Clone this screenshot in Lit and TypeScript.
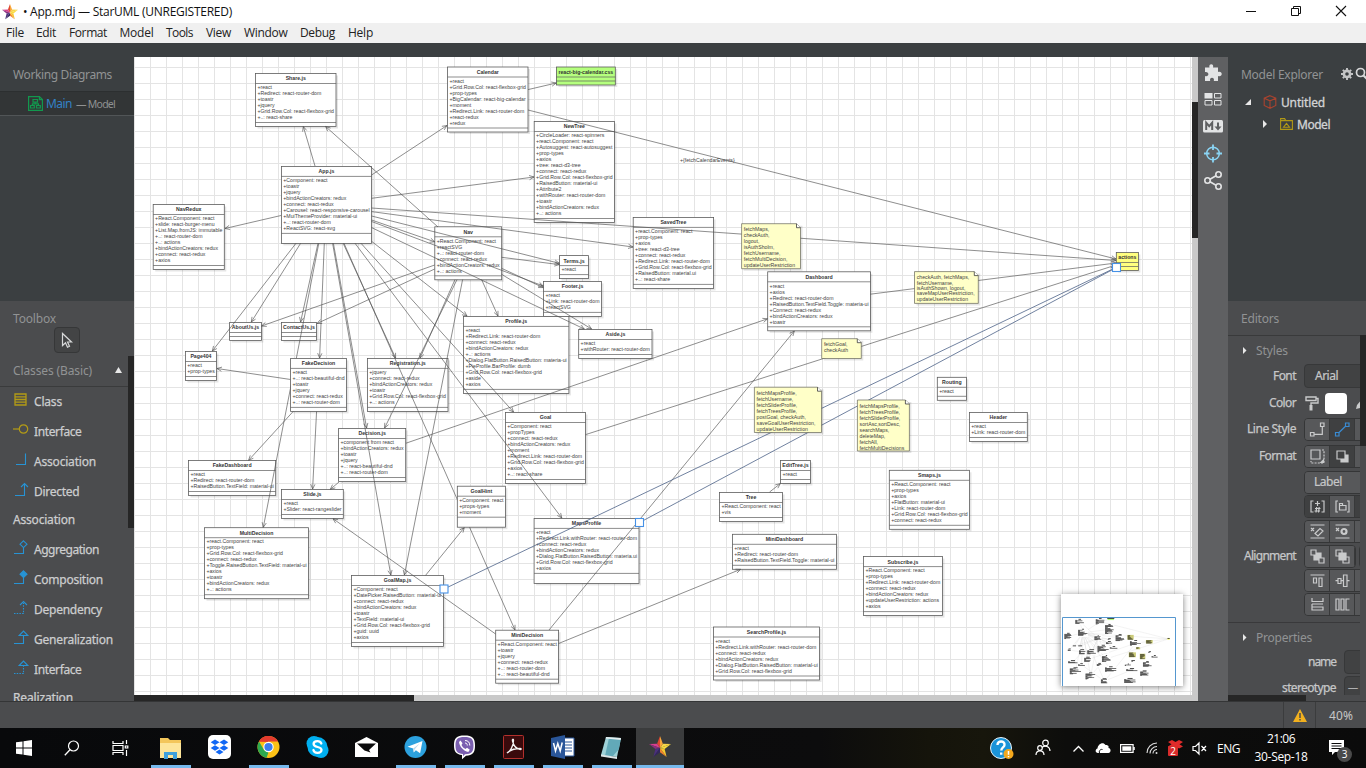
import { LitElement, html, svg, css } from "lit";
import { customElement, property } from "lit/decorators.js";

/* Text whose letter spacing is adjusted so that it takes exactly the given width. */
@customElement("fit-text")
class FitText extends LitElement {
  @property({ type: Number }) w = 0;
  static styles = css`
    :host { display: inline-block; white-space: pre; }
  `;
  render() {
    return html`<slot></slot>`;
  }
  firstUpdated() {
    const n = (this.textContent || "").length;
    const natural = this.getBoundingClientRect().width;
    if (this.w && n) this.style.letterSpacing = (this.w - natural) / n + "px";
  }
}

type Box = { x: number; y: number; r: number; t: string; a: string[]; ops?: number; fill?: string; top?: boolean };
const b = (x: number, y: number, r: number, t: string, a: string, extra: Partial<Box> = {}): Box => ({
  x, y, r, t, a: a ? a.split("|") : [], ...extra,
});

const BOXES: Box[] = [
  b(255.5, 73.5, 336, "Share.js", "react|Redirect: react-router-dom|toastr|jquery|Grid.Row.Col: react-flexbox-grid|..: react-share"),
  b(281.4, 166.4, 371.6, "App.js", "Component: react|toastr|jquery|bindActionCreators: redux|connect: react-redux|Carousel: react-responsive-carousel|MuiThemeProvider: material-ui|..: react-router-dom|ReactSVG: react-svg", { ops: 10 }),
  b(153.2, 204.5, 224.3, "NavRedux", "React.Component: react|slide: react-burger-menu|List.Map.fromJS: immutable|..: react-router-dom|..: actions|bindActionCreators: redux|connect: react-redux|axios"),
  b(447.5, 67, 528, "Calendar", "react|Grid.Row.Col: react-flexbox-grid|prop-types|BigCalendar: react-big-calendar|moment|Redirect.Link: react-router-dom|react-redux|redux"),
  b(556.4, 67, 615.3, "react-big-calendar.css", "", { fill: "#b5ff7e" }),
  b(534.2, 121.5, 614.5, "NewTree", "CircleLoader: react-spinners|react.Component: react|Autosuggest: react-autosuggest|prop-types|axios|tree: react-d3-tree|connect: react-redux|Grid.Row.Col: react-flexbox-grid|RaisedButton: material-ui|Attribute2|withRouter: react-router-dom|toastr|bindActionCreators: redux|..: actions"),
  b(434.8, 226.8, 501.7, "Nav", "React.Component: react|reactSVG|..: react-router-dom|connect: react-redux|bindActionCreators: redux|..: actions"),
  b(559.5, 255.6, 588.6, "Terms.js", "react"),
  b(543.5, 281.4, 601.6, "Footer.js", "react|Link: react-router-dom|reactSVG"),
  b(633.2, 217.4, 713.6, "SavedTree", "react.Component: react|prop-types|axios|tree: react-d3-tree|connect: react-redux|Redirect.Link: react-router-dom|Grid.Row.Col: react-flexbox-grid|RaisedButton: material.ui|..: react-share"),
  b(185.4, 351.5, 216.5, "Page404", "react|prop-types"),
  b(229.6, 322.5, 261.4, "AboutUs.js", ""),
  b(281.4, 322.5, 316.5, "ContactUs.js", ""),
  b(290.6, 358.4, 346.5, "FakeDecision", "react|..: react-beautiful-dnd|toastr|jquery|connect: react-redux|..: react-router-dom", { top: true }),
  b(367.4, 358.4, 448, "Registration.js", "jquery|connect: react-redux|bindActionCreators: redux|toastr|Grid.Row.Col: react-flexbox-grid|..: actions"),
  b(338.6, 428.5, 405.7, "Decision.js", "component from react|bindActionCreators: redux|toastr|jquery|..: react-beautiful-dnd|..: react-router-dom"),
  b(188.5, 460.5, 275.7, "FakeDashboard", "react|Redirect: react-router-dom|RaisedButton.TextField: material-ui"),
  b(281.5, 489.5, 343.3, "Slide.js", "react|Slider: react-rangeslider"),
  b(204.5, 527.7, 308.5, "MultiDecision", "react.Component: react|prop-types|Grid.Row.Col: react-flexbox-grid|connect: react-redux|Toggle.RaisedButton.TextField: material-ui|axios|toastr|bindActionCreators: redux|..: actions"),
  b(351.5, 575.5, 443.5, "GoalMap.js", "Component: react|DatePicker.RaisedButton: material-ui|connect: react-redux|bindActionCreators: redux|toastr|TextField: material-ui|Grid.Row.Col: react-flexbox-grid|guid: uuid|axios"),
  b(457.3, 486.2, 505.4, "GoalHint", "Component: react|props-types|moment", { ops: 10, top: true }),
  b(463.5, 316.4, 568.9, "Profile.js", "react|Redirect.Link: react-router-dom|connect: react-redux|bindActionCreators: redux|..: actions|Dialog.FlatButton.RaisedButton: materia-ui|PieProfile.BarProfile: dumb|Grid.Row.Col: react-flexbox-grid|aside|axios"),
  b(578.7, 329.5, 652, "Aside.js", "react|withRouter: react-router-dom"),
  b(505.4, 412.5, 585.6, "Goal", "Component: react|propTypes|connect: react-redux|bindActionCreators: redux|moment|Redirect.Link: react-router-dom|Grid.Row.Col: react-flexbox-grid|axios|..: react-share"),
  b(534.1, 518.4, 639, "MapsProfile", "react|Redirect.Link.withRouter: react-router-dom|connect: react-redux|bindActionCreators: redux|Dialog.FlatButton.RaisedButton: materia.ui|Grid.Row.Col: react-flexbox-grid|axios", { ops: 10 }),
  b(495.7, 630.2, 558.6, "MiniDecision", "React.Component: react|toastr|jquery|connect: react-redux|..: react-router-dom|..: react-beautiful-dnd"),
  b(767.7, 271.8, 870.4, "Dashboard", "react|axios|Redirect: react-router-dom|RaisedButton.TextField.Toggle: materia-ui|Connect: react-redux|bindActionCreators: redux|toastr"),
  b(1116.3, 252.5, 1138.4, "actions", "", { fill: "#ffff7f" }),
  b(780.5, 460.5, 810.4, "EditTree.js", "react"),
  b(719.5, 492.5, 782.6, "Tree", "React.Component: react|vis"),
  b(732.4, 534.3, 836.5, "MiniDashboard", "react|Redirect: react-router-dom|RaisedButton.TextField.Toggle: material-ui"),
  b(889.3, 470.3, 969.5, "Smaps.js", "React.Component: react|prop-types|axios|FlatButton: material-ui|Link: react-router-dom|Grid.Row.Col: react-flexbox-grid|connect: react-redux"),
  b(863.5, 556.6, 942.5, "Subscribe.js", "React.Component: react|prop-types|Redirect.Link: react-router-dom|connect: react-redux|bindActionCreators: redux|updateUserRestriction: actions|axios"),
  b(713.4, 627, 819.5, "SearchProfile.js", "react|Redirect.Link.withRouter: react-router-dom|connect: react-redux|bindActionCreators: redux|Dialog.FlatButton.RaisedButton: material-ui|Grid.Row.Col: react-flexbox-grid"),
  b(937.3, 377.3, 966.4, "Routing", "react"),
  b(969.4, 412.5, 1027.3, "Header", "react|Link: react-router-dom"),
];

/* x1, y1, x2, y2 : the arrowhead is at the second point */
const EDGES: number[][] = [
  [315, 166, 303.3, 126.5], [438, 227, 325.6, 126.5], [281, 215.5, 225, 228.5], [371.6, 175, 447, 125.5],
  [371.6, 198.3, 534, 177], [371.6, 208, 1116, 260.5], [371.6, 211.6, 633, 247], [371.6, 216, 559.3, 263.3],
  [371.6, 220, 434.7, 241.8], [371.6, 221.5, 543.3, 286], [371.6, 227.6, 584.3, 329], [371.6, 241.3, 467, 316],
  [501.6, 257.3, 559.3, 264.6], [501.6, 268.3, 543.3, 287.6], [501.6, 274.3, 591.6, 329], [434.7, 265, 261.6, 326],
  [434.7, 269, 317, 323.5], [455, 279.6, 420, 358], [457, 279.6, 384.6, 428], [462.6, 279.6, 404.4, 575],
  [481.6, 279.6, 498, 316], [296, 243.3, 212.3, 351], [300.6, 243.3, 251.3, 322], [318, 243.3, 300.6, 322],
  [318.8, 243.3, 263.3, 527.3], [324.3, 243.3, 319.6, 358], [332.6, 243.3, 390.8, 575], [333.4, 243.3, 366.6, 428],
  [343.2, 243.3, 395.6, 358], [344, 243.3, 515, 630], [355, 243.3, 561.8, 518], [361, 243.3, 513.5, 412],
  [290.6, 379.5, 217, 368.5], [293.6, 411, 248.6, 460.3], [316.6, 411, 312.6, 489], [339, 482, 330.3, 489.3],
  [406, 443.2, 767.5, 318.8], [585.6, 434.6, 1116, 265], [425.6, 575.3, 464.3, 527.6], [495.6, 634, 333, 518.7],
  [558.6, 643.5, 740.6, 569.3], [549, 630, 794.3, 331], [528, 89.6, 556.3, 83], [528, 110, 1116, 259],
  [870.3, 294.2, 1116, 263], [769.6, 492, 780.3, 483.6],
];
const SELECTED: number[][] = [[444, 589, 1116, 267.5], [639.6, 522.5, 1116.5, 267.5]];
const HANDLES: number[][] = [[444, 589], [639.5, 522.5], [1116.5, 267.5]];

type Note = { x: number; y: number; r: number; e: number; l: string[] };
const n = (x: number, y: number, r: number, e: number, l: string): Note => ({ x, y, r, e, l: l.split("|") });
const NOTES: Note[] = [
  n(741.6, 223.7, 800.5, 268.7, "fetchMaps,|checkAuth,|logout,|isAuthSholm,|fetchUsername,|fetchMultiDecision,|updateUserRestriction"),
  n(914.5, 271.6, 978.3, 303.4, "checkAuth, fetchMaps,|fetchUsername,|isAuthShown, logout,|saveMapUserRestriction,|updateUserRestriction"),
  n(821.7, 338.7, 861.3, 358.5, "fetchGoal,|checkAuth"),
  n(754.4, 387.2, 821.5, 432.5, "fetchMapsProfile,|fetchUsername,|fetchSliderProfile,|fetchTreesProfile,|postGoal, checkAuth,|saveGoalUserRestriction,|updateUserRestriction"),
  n(857.4, 400, 909.4, 451, "fetchMapsProfile,|fetchTreesProfile,|fetchSliderProfile,|sortAsc,sortDesc,|searchMaps,|deleteMap,|fetchAll,|fetchMultiDecisions"),
];

const attrH = (o: Box) => (o.a.length ? o.a.length * 6 + 3 : 4);
const boxH = (o: Box) => 10 + attrH(o) + (o.ops || 4);

const drawBox = (o: Box) => {
  const w = o.r - o.x;
  const h = boxH(o);
  return svg`
    <rect class="shade" x=${o.x + 2} y=${o.y + 2} width=${w} height=${h}></rect>
    <rect class="box" x=${o.x} y=${o.y} width=${w} height=${h} fill=${o.fill || "#fff"}></rect>
    <path class="rule" d="M${o.x} ${o.y + 10}h${w}M${o.x} ${o.y + 10 + attrH(o)}h${w}"></path>
    <text class="ttl" x=${o.x + w / 2} y=${o.y + 6.9}>${o.t}</text>
    ${o.a.map((s, i) => svg`<text class="att" x=${o.x + 1.9} y=${o.y + 15.7 + i * 6}>+${s}</text>`)}`;
};

const drawNote = (o: Note) => svg`
  <path class="shade" d="M${o.x + 2} ${o.y + 2}H${o.r + 2}V${o.e + 2}H${o.x + 2}Z"></path>
  <path class="note" d="M${o.x} ${o.y}H${o.r - 4}l4 4V${o.e}H${o.x}Z"></path>
  <path class="fold" d="M${o.r - 4} ${o.y}v4h4"></path>
  ${o.l.map((s, i) => svg`<text class="att" x=${o.x + 2.2} y=${o.y + 7.6 + i * (o.l.length === 5 ? 5.4 : 6)}>${s}</text>`)}`;

const drawEdge = (p: number[], cls: string) => {
  const a = Math.atan2(p[3] - p[1], p[2] - p[0]);
  const q = (d: number) => `${p[2] - 5.2 * Math.cos(a + d)} ${p[3] - 5.2 * Math.sin(a + d)}`;
  return svg`<path class=${cls} d="M${p[0]} ${p[1]}L${p[2]} ${p[3]}M${q(0.42)}L${p[2]} ${p[3]}L${q(-0.42)}"></path>`;
};

const drawMini = () => svg`
  ${EDGES.map((p) => svg`<path d="M${p[0]} ${p[1]}L${p[2]} ${p[3]}" stroke="#999" stroke-width="2" fill="none" opacity=".55"></path>`)}
  ${BOXES.map((o) => svg`
    <rect x=${o.x} y=${o.y} width=${o.r - o.x} height=${boxH(o)} fill=${o.fill || "#fff"}></rect>
    <rect x=${(o.x + o.r) / 2 - o.t.length * 1.5} y=${o.y} width=${o.t.length * 3} height="8" fill="#333"></rect>
    ${o.a.map((s, i) => svg`<rect x=${o.x - 2} y=${o.y + 10 + i * 6} width=${s.length * 2.4 + 4} height="6" fill=${i % 3 ? "#222" : "#484848"}></rect>`)}`)}
  ${NOTES.map((o) => svg`
    <rect x=${o.x} y=${o.y} width=${o.r - o.x} height=${o.e - o.y} fill="#cccc7a"></rect>
    ${o.l.map((s, i) => svg`<rect x=${o.x + 3} y=${o.y + 3 + i * 6} width=${s.length * 2.3} height="5" fill="#332"></rect>`)}`)}`;

const icon = (w: number, h: number, body: unknown, cls = "") =>
  html`<svg class="ic ${cls}" width=${w} height=${h} viewBox="0 0 ${w} ${h}">${body}</svg>`;

const star = (s: number) => html`<svg class="ic" width=${s} height=${s} viewBox="0 0 20 20">
  <path d="M10 0L7.4 7 10 11z" fill="#e0492f"></path>
  <path d="M0 7.2L7.4 7 10 11z" fill="#d93f8d"></path><path d="M0 7.2l5.8 4.6L10 11z" fill="#8a2f7d"></path>
  <path d="M4 19l1.8-7.2L10 11z" fill="#4b2f7c"></path><path d="M4 19l6-4.2V11z" fill="#33265e"></path>
  <path d="M16 19l-6-4.2V11z" fill="#f07f2e"></path><path d="M16 19l-1.8-7.2L10 11z" fill="#f7c62f"></path>
  <path d="M20 7.2l-5.8 4.6L10 11z" fill="#fbdc3c"></path><path d="M20 7.2L12.6 7 10 11z" fill="#f8d648"></path>
  <path d="M10 0l2.6 7L10 11z" fill="#f9a63a"></path></svg>`;

const conn = (head: unknown, dashed = false) => html`<svg class="ic tool" width="16" height="16" viewBox="0 0 16 16">
  <g fill="none" stroke="#2793d4" stroke-width="1.1">
    <path d="M1 13.5H10.5V3" stroke-dasharray=${dashed ? "1.5 1.2" : "none"}></path>${head}</g></svg>`;

const TOOLS: [string, number, unknown][] = [
  ["Class", 28, html`<svg class="ic tool" width="16" height="16" viewBox="0 0 16 16"><path d="M2 2h11v11H2zM2 4.8h11M2 7.5h11M2 10.2h11" fill="none" stroke="#b39b16" stroke-width="1.3"></path></svg>`],
  ["Interface", 47.5, html`<svg class="ic tool" width="16" height="16" viewBox="0 0 16 16"><g fill="none" stroke="#b39b16" stroke-width="1.2"><circle cx="10.5" cy="7" r="4.2"></circle><path d="M0 7h6"></path></g></svg>`],
  ["Association", 62, html`<svg class="ic tool" width="16" height="16" viewBox="0 0 16 16"><path d="M3 12.5h9.5V1.5" fill="none" stroke="#2793d4" stroke-width="1.1"></path></svg>`],
  ["Directed", 45.5, html`<svg class="ic tool" width="16" height="16" viewBox="0 0 16 16"><path d="M2 13.5h9.5V1.5M8 5l3.5-3.5L15 5" fill="none" stroke="#2793d4" stroke-width="1.1"></path></svg>`],
  ["#Association", 62, ""],
  ["Aggregation", 65, conn(svg`<path d="M10.5.8L14 4.2 10.5 7.6 7 4.2z" fill="#4b4c4e"></path>`)],
  ["Composition", 69, conn(svg`<path d="M10.5.8L14 4.2 10.5 7.6 7 4.2z" fill="#2793d4"></path>`)],
  ["Dependency", 68, conn(svg`<path d="M7 5l3.500-3.500L14 5"></path>`, true)],
  ["Generalization", 79, conn(svg`<path d="M6.200 5.500L10.500 1l4.300 4.500z" fill="#4b4c4e"></path>`)],
  ["Interface", 47.5, conn(svg`<path d="M6.200 5.500L10.500 1l4.300 4.500z" fill="#4b4c4e"></path>`, true)],
  ["#Realization", 60, ""],
];

const MENU: [string, number, number][] = [
  ["File", 18, 12], ["Edit", 20, 13], ["Format", 38, 12.5], ["Model", 34, 12.5], ["Tools", 27, 13],
  ["View", 25, 13], ["Window", 43.5, 12.5], ["Debug", 35, 13], ["Help", 25, 0],
];

const G = "#c9cacb";
const btn = (body: unknown, cls = "") => html`<span class="btn ${cls}"><svg width="17" height="17" viewBox="0 0 17 17"><g fill="none" stroke=${G} stroke-width="1.2">${body}</g></svg></span>`;

const TASKS: { on?: boolean; active?: boolean; i: unknown }[] = [
  { on: true, i: svg`<path d="M2 4h8l2 2h11v18H2z" fill="#f3c65b"></path><path d="M2 9h21v15H2z" fill="#fde59a"></path><path d="M6 25v-7h13v7h-4v-4h-5v4z" fill="#3fa0dc"></path>` },
  { i: svg`<rect x="1" y="1" width="23" height="24" rx="5" fill="#fff"></rect><path d="M8 5.500l4.500 2.800L8 11 3.700 8.300zM17 5.500l4.300 2.800L17 11l-4.500-2.700zM8 11.200l4.500 2.800L8 16.700 3.700 14zM17 11.200l4.300 2.800-4.300 2.700-4.500-2.700zM12.500 15.500l4 2.500-4 2.600-4-2.600z" fill="#1168f5"></path>` },
  { on: true, i: svg`<circle cx="12.500" cy="13" r="11" fill="#fbc116"></circle><path d="M3 7.500A11 11 0 0 1 22.100 7.500H12.500z" fill="#e33b2e"></path><path d="M3 7.500L8 16l4.500 2.500-2 5.300A11 11 0 0 1 3 7.500z" fill="#2da94f"></path><path d="M3 7.500A11 11 0 0 1 12.500 2v6z" fill="#e33b2e"></path><circle cx="12.500" cy="13" r="5.200" fill="#fff"></circle><circle cx="12.500" cy="13" r="4.100" fill="#3b7ded"></circle>` },
  { i: svg`<circle cx="9" cy="9.500" r="7.500" fill="#00aff0"></circle><circle cx="16" cy="16.500" r="7.500" fill="#00aff0"></circle><circle cx="12.500" cy="13" r="10" fill="#00aff0"></circle><path d="M16.300 9.500c-.6-1.700-2-2.300-3.800-2.300-2.200 0-3.900 1-3.900 2.800 0 4 7.900 2 7.900 5.800 0 1.900-1.800 3-4 3-2.100 0-3.700-1-4.100-2.800" fill="none" stroke="#fff" stroke-width="2.300" stroke-linecap="round"></path>` },
  { i: svg`<path d="M1 9l11.500-6L24 9v14H1z" fill="#fff"></path><path d="M3 9.500h19l-7 6.500 1.500 2.500-6-2z" fill="#0b0b0c"></path>` },
  { on: true, i: svg`<circle cx="12.500" cy="13" r="11" fill="#2ca1de"></circle><path d="M4.500 12.800L19.500 7l-2.400 12.300-4.200-3-2.200 2.200-.5-4z" fill="#fff"></path><path d="M10.200 14.500l6.500-5-5 5.800-.8 3z" fill="#bcd9ec"></path>` },
  { on: true, i: svg`<path d="M12.500 1.500c8 0 10.500 2.500 10.500 10s-2.500 10-9 10.200L10 25.300v-4.200C4 20.200 2 17.500 2 11.500c0-7.500 2.500-10 10.500-10z" fill="#fff"></path><path d="M12.500 3c7 0 9 2 9 8.500S19.500 20 13 20.200l-2 2V20c-5.500-.5-7.500-2.500-7.500-8.500C3.500 5 5.500 3 12.500 3z" fill="#7a5fb0"></path><path d="M8.500 6.500l2 2.800-1 1.700c.8 2 2.200 3.300 4 4l1.500-1.200 2.800 2-1.500 2.200C11.500 17 7.500 12.500 7 8z" fill="#fff"></path><path d="M13 6.500c3 0 4.800 1.800 4.800 5M13 9c1.500 0 2.300 1 2.300 2.500" fill="none" stroke="#fff"></path>` },
  { on: true, i: svg`<rect x="2.500" y="1.500" width="20" height="23" rx="1" fill="#3a0a0c" stroke="#b3302c"></rect><path d="M6 19c3-1.500 6.500-6.500 6.500-12.500 0-2-1.500-1.500-1 .5 1 4.500 4 8 8 8.500 1 0 1-1-.5-1C15 14.500 9 16 6 19z" fill="none" stroke="#f2f2f2" stroke-width="1.300"></path>` },
  { on: true, i: svg`<path d="M13 4h11v18H13z" fill="#fff" stroke="#2a5699"></path><path d="M15 8h7M15 11h7M15 14h7M15 17h7" stroke="#2a5699"></path><path d="M1 4l14-3v24L1 22z" fill="#2a5699"></path><path d="M3.500 9l2 8 2.300-7.500L10.200 17l2-8.500" fill="none" stroke="#fff" stroke-width="1.500"></path>` },
  { on: true, i: svg`<path d="M7 3l15 1-4 19-16-2z" fill="#9fd2d8"></path><path d="M10 4l12 0-2 11-6 7H6z" fill="#62a9b8"></path><path d="M7 3l15 1-.3 2-15-1.500z" fill="#e3eef0"></path><path d="M2 20.500l16 2.500v2L2 22.500z" fill="#dde6e8"></path>` },
  { on: true, active: true, i: "" },
];

@customElement("app-root")
class AppRoot extends LitElement {
  static styles = css`
    :host { display: block; width: 1366px; height: 768px; overflow: hidden; font-family: "Noto Sans", "Open Sans", sans-serif; font-size: 12px; color: #c6c7c8; }
    * { box-sizing: border-box; }
    svg { display: block; flex: none; overflow: visible; }
    .app { display: grid; grid-template-rows: 23px 20px 14px 644px 27px 40px; height: 768px; background: #3b3f41; }
    .title { background: #fff; color: #111; display: flex; align-items: center; justify-content: space-between; padding: 0 20px 0 2px; font: 12px "Open Sans", sans-serif; }
    .title .name { display: flex; align-items: center; gap: 5px; }
    .title .cap { display: flex; gap: 35px; }
    .title .cap svg { margin-top: -2px; }
    .menu { background: #f0f0f0; color: #222; display: flex; align-items: center; padding-left: 6px; padding-bottom: 1px; font: 12px "Open Sans", sans-serif; }
    .body { display: grid; grid-template-columns: 134px 1058px 6px 30px 138px; min-height: 0; }
    .left, .right { display: flex; flex-direction: column; overflow: hidden; min-width: 0; }
    .head { color: #919394; }
    .upper { height: 244px; flex: none; background: #3b3f41; }
    .wd { height: 34px; padding: 10px 0 0 13px; line-height: 16px; }
    .cur { height: 25px; background: #323536; border-top: 1px solid #2c2f30; border-bottom: 1px solid #515557; display: flex; align-items: center; padding-left: 28px; color: #3382c6; gap: 3px; }
    .cur .sub { color: #8f9192; font-size: 10.5px; margin-left: 1px; padding-top: 1px; }
    .lower { flex: 1; background: #4b4c4e; min-height: 0; overflow: hidden; display: grid; grid-template-columns: 128px 6px; }
    .tb { height: 26px; padding: 10px 0 0 13px; line-height: 16px; }
    .arrow { margin-left: 54px; width: 26px; height: 26px; border-radius: 4px; background: #434445; border: 1px solid #363738; display: grid; place-items: center; }
    .grp { height: 34px; padding: 1px 6px 0 13px; border-bottom: 1px solid #3a3b3c; display: flex; align-items: center; justify-content: space-between; }
    .row { height: 30px; display: flex; align-items: center; padding-left: 13px; gap: 5px; color: #cdcecf; -webkit-text-stroke: 0.25px #cdcecf; }
    .row fit-text { margin-top: -1px; }
    .row .tool { margin-top: -4px; }
    .row.plain { height: 28px; padding-bottom: 2px; }
    .lthumb { margin-top: 55px; height: 172px; background: #262626; }
    .canvas { display: grid; grid-template-rows: 638px 6px; }
    .hbar { background: #c9c9c9; }
    .hbar i { display: block; width: 280px; height: 6px; background: #262626; }
    .vbar { background: #c9c9c9; padding-top: 45px; }
    .vbar i { display: block; height: 136px; background: #262626; }
    .diagram { background: #fff; }
    .diagram text { font-family: "Liberation Sans", Arial, sans-serif; font-size: 5.2px; fill: #444; white-space: pre; }
    .diagram .ttl { font-weight: bold; text-anchor: middle; fill: #333; }
    .shade { fill: #000; opacity: 0.1; }
    .box { stroke: #5c5c5c; stroke-width: 0.8; }
    .rule { stroke: #5c5c5c; stroke-width: 0.7; fill: none; }
    .note { fill: #ffffc8; stroke: #66665a; stroke-width: 0.7; }
    .fold { fill: #fff; stroke: #222; stroke-width: 0.7; }
    .edge { stroke: #505050; stroke-width: 0.65; fill: none; }
    .sel { stroke: #4d6288; stroke-width: 0.8; fill: none; }
    .handle { fill: #fff; stroke: #4691e6; stroke-width: 1.1; }
    .frame { filter: drop-shadow(0 1px 3px rgba(0, 0, 0, 0.5)); }
    .mini { overflow: hidden; }
    .strip { background: #5f6062; display: flex; flex-direction: column; align-items: center; padding-top: 2px; }
    .strip .ic { height: 27px; width: 20px; }
    .me { height: 34px; padding: 10px 0 0 13px; line-height: 16px; display: flex; align-items: flex-start; }
    .me .gear { margin: 1px 0 0 18px; }
    .node { height: 22px; display: flex; align-items: center; color: #d3d4d5; -webkit-text-stroke: 0.3px #d3d4d5; }
    .node.n1 { padding-left: 17px; }
    .node.n2 { padding-left: 35px; }
    .node .cube { margin: 0 4px 0 12px; }
    .node .folder { margin: 0 4px 0 13px; }
    .ed { height: 35px; padding: 10px 0 0 13px; line-height: 16px; border-bottom: 1px solid #393a3b; flex: none; }
    .edit { flex: 1; background: #4b4c4e; display: flex; flex-direction: column; min-height: 0; overflow: hidden; }
    .cols { display: grid; grid-template-columns: 132px 6px; flex: none; height: 359px; }
    .form { overflow: hidden; height: 359px; }
    .cols .thumb { background: #262626; height: 111px; margin-top: -1px; }
    .sec { height: 26px; display: flex; align-items: center; padding: 2px 0 0 15px; gap: 9px; }
    .line { display: flex; align-items: center; width: 200px; }
    .h28 { height: 28px; } .h27 { height: 27px; } .h26 { height: 26px; } .h25 { height: 25px; } .h24 { height: 24px; } .h21 { height: 21px; }
    .line .lab { width: 68px; display: flex; justify-content: flex-end; margin: -2px 8px 0 0; -webkit-text-stroke: 0.25px #c6c7c8; flex: none; }
    .line .lab.wide { width: 108px; }
    .field { height: 24px; width: 90px; border-radius: 4px; border: 1px solid #373839; background: #414243; padding: 0 0 2px 10px; display: flex; align-items: center; -webkit-text-stroke: 0.2px #c6c7c8; }
    .field.dash { padding-left: 3px; color: #8b8c8d; font-size: 10px; }
    .btns { display: flex; border: 1px solid #353637; border-radius: 4px; height: 23px; overflow: hidden; flex: none; }
    .btns + .btns { margin-left: 3px; }
    .btn { width: 25px; height: 21px; background: #57585a; border-right: 1px solid #38393a; display: grid; place-items: center; flex: none; }
    .btn.on { background: #3f4041; }
    .btn.lbl { width: 90px; place-items: center start; padding: 0 0 2px 9px; -webkit-text-stroke: 0.2px #c6c7c8; }
    .swatch { width: 22px; height: 21px; background: #fff; border-radius: 4px; margin: 0 9px 0 6px; }
    .sec.props { border-top: 1px solid #39393b; margin-top: 5px; height: 27px; }
    .hthumb { width: 78px; height: 6px; background: #262626; }
    .status { background: #4b4c4e; border-top: 1px solid #343536; display: flex; justify-content: flex-end; align-items: stretch; }
    .status div { border-left: 1px solid #3b3c3d; display: grid; place-items: center; }
    .status .warn { width: 32px; }
    .status .zoom { width: 51px; font-size: 12px; }
    .task { background: linear-gradient(90deg, #08090b 0%, #0c0c0d 60%, #15140b 68%, #17160c 72%, #0d0d0c 78%, #0b0b0b 100%); display: flex; color: #fff; font: 12px "Open Sans", sans-serif; }
    .task .sys { width: 48px; display: grid; place-items: center; }
    .task .gap { width: 2px; }
    .task .t { width: 49px; height: 40px; display: grid; grid-template-rows: 37px 3px; justify-items: center; align-items: center; }
    .task .t.on::after { content: ""; display: block; width: 40px; height: 3px; background: #76b9ed; }
    .task .t.active { background: #3b3c3d; width: 48px; }
    .task .t.active::after { width: 48px; }
    .tray { margin-left: auto; display: flex; align-items: center; }
    .tray .c { display: grid; place-items: center; height: 40px; }
    .tray .help { width: 44px; padding-left: 4px; }
    .w42 { width: 42px; } .w29 { width: 29px; } .w20 { width: 20px; } .w28 { width: 28px; } .w22 { width: 22px; } .w24 { width: 24px; } .w35 { width: 35px; }
    .tray .action { width: 50px; padding-top: 5px; }
    .clock { line-height: 18px; text-align: center; width: 70px; }
    .badge { font: 10px "Open Sans", sans-serif; fill: #fff; text-anchor: middle; }
  `;

  private diagram() {
    return html`<svg class="diagram" width="1058" height="638" viewBox="134 57 1058 638">
      <defs>
        <pattern id="grid" x="134" y="67" width="16" height="16" patternUnits="userSpaceOnUse">
          <path d="M0 .5H16M.5 0V16" stroke="#e4e4e4" fill="none"></path>
        </pattern>
      </defs>
      <rect x="134" y="57" width="1058" height="638" fill="url(#grid)"></rect>
      ${BOXES.filter((o) => !o.top).map(drawBox)}
      ${EDGES.map((p) => drawEdge(p, "edge"))}
      ${SELECTED.map((p) => drawEdge(p, "sel"))}
      ${BOXES.filter((o) => o.top).map(drawBox)}
      ${NOTES.map(drawNote)}
      <text x="680" y="162">+{fetchCalendarEvents}</text>
      ${HANDLES.map((p) => svg`<rect class="handle" x=${p[0] - 4} y=${p[1] - 4} width="8" height="8"></rect>`)}
      <rect class="frame" x="1061" y="594" width="122" height="92" fill="#fff"></rect>
      <svg class="mini" x="1061" y="594" width="122" height="92" viewBox="1061 594 122 92">
        <g transform="translate(1048.2 611) scale(.1068)">${drawMini()}</g>
        <path d="M1062.500 686V617.500H1175.500V686" fill="none" stroke="#5597cf"></path>
      </svg>
    </svg>`;
  }

  private left() {
    return html`<div class="left">
      <div class="upper">
        <div class="wd head"><fit-text w="99">Working Diagrams</fit-text></div>
        <div class="cur">
          ${icon(15, 15, svg`<g fill="none" stroke="#12984e" stroke-width="1.200"><path d="M.6.6h10.800l3 3v10.800H.6z"></path><path d="M11.400.6v3h3"></path><path d="M5 3.500h4.500v2.700H5zM2.500 9.500h3.800v2.500H2.500zM8.500 9.500h3.800v2.500H8.500zM7.200 6.200v1.600M4.400 9.500V7.800h6v1.700"></path></g>`)}
          <fit-text w="26">Main</fit-text><span class="sub"><fit-text w="39">— Model</fit-text></span>
        </div>
      </div>
      <div class="lower">
        <div>
          <div class="tb head"><fit-text w="43">Toolbox</fit-text></div>
          <div class="arrow">${icon(12, 17, svg`<path d="M1.500 1.500v12l3-2.800 2 4.500 2-.9-2-4.300h4z" fill="none" stroke="#d8d9da" stroke-width="1.200"></path>`)}</div>
          <div class="grp head"><fit-text w="79">Classes (Basic)</fit-text>${icon(7, 7, svg`<path d="M0 6h7L3.500 0z" fill="#e8e8e8"></path>`)}</div>
          ${TOOLS.map(([t, w, i]) => t[0] === "#"
            ? html`<div class="row plain"><fit-text w=${w}>${t.slice(1)}</fit-text></div>`
            : html`<div class="row">${i}<fit-text w=${w}>${t}</fit-text></div>`)}
        </div>
        <div class="lthumb"></div>
      </div>
    </div>`;
  }

  private strip() {
    const c = "#e3e4e5";
    const v = (body: unknown) => html`<svg class="ic" width="20" height="27" viewBox="-10 -13.500 20 27">${body}</svg>`;
    return html`<div class="strip">
      ${v(svg`<path d="M-8-5h4.500c-1.500-4.500 5-4.500 3.500 0H5V-.5c5-1.500 5 5.500 0 4V8.500H.8c1.400-4.500-5-4.500-3.600 0H-8V3.500c4.500 1.300 4.500-5 0-4z" fill=${c}></path>`)}
      ${v(svg`<path d="M-8.500-6.500h8V-1h-8z" fill=${c}></path><path d="M1.500-6h6.500v4.500H1.500zM-8 1h7v4.500h-7zM1.500 1h6.500v4.500H1.500z" fill="none" stroke=${c}></path>`)}
      ${v(svg`<rect x="-10" y="-6.500" width="20" height="12.500" rx="1.500" fill=${c}></rect><path d="M-6.800 3.500v-7.300l3 3.500 3-3.500v7.300M5-4v5" fill="none" stroke="#5f6062" stroke-width="2"></path><path d="M1.500 0h7L5 4z" fill="#5f6062"></path>`)}
      ${v(svg`<circle r="6.300" fill="none" stroke="#8ad4f4" stroke-width="1.500"></circle><path d="M0-9v5.500M0 9V3.500M-9 0h5.500M9 0H3.500" stroke="#8ad4f4" stroke-width="1.800"></path>`)}
      ${v(svg`<g fill="none" stroke=${c} stroke-width="1.600"><circle cx="-5.500" cy="0" r="2.700"></circle><circle cx="5.500" cy="-6" r="2.700"></circle><circle cx="5.500" cy="6" r="2.700"></circle><path d="M-3-1.300L3-4.700M-3 1.300L3 4.700"></path></g>`)}
    </div>`;
  }

  private right() {
    return html`<div class="right">
      <div class="upper">
        <div class="me head"><fit-text w="82">Model Explorer</fit-text>
          ${icon(12, 12, svg`<circle cx="6" cy="6" r="3.100" fill="none" stroke="#c4c5c6" stroke-width="2.600"></circle><path d="M6 0v12M0 6h12M1.800 1.800l8.400 8.400M10.200 1.800l-8.400 8.400" stroke="#c4c5c6" stroke-width="1.900" stroke-dasharray="2.200 7.600 2.200 9"></path>`, "gear")}
          ${icon(13, 13, svg`<circle cx="7.500" cy="5.500" r="4" fill="none" stroke="#d8d9da" stroke-width="1.700"></circle><path d="M10.500 8.500l4 4" stroke="#d8d9da" stroke-width="2"></path>`)}
        </div>
        <div class="node n1">
          ${icon(6, 6, svg`<path d="M6 0v6H0z" fill="#e8e8e8"></path>`)}
          ${icon(14, 14, svg`<path d="M7 .7l5.800 2.500v7.300L7 13.300 1.200 10.500V3.200zM1.200 3.200L7 5.800l5.800-2.600M7 5.800v7.500" fill="none" stroke="#a8432f" stroke-width="1.100"></path>`, "cube")}
          <fit-text w="44">Untitled</fit-text>
        </div>
        <div class="node n2">
          ${icon(4, 8, svg`<path d="M0 0l4 4-4 4z" fill="#e8e8e8"></path>`)}
          ${icon(13, 12, svg`<path d="M.6 11.400V.6h4l1.200 2h6.600v8.800zM.6 2.600h5.200M3.500 9.200h6L6.500 5.300z" fill="none" stroke="#b09816" stroke-width="1.100"></path>`, "folder")}
          <fit-text w="33">Model</fit-text>
        </div>
      </div>
      <div class="edit">
        <div class="ed head"><fit-text w="38">Editors</fit-text></div>
        <div class="cols">
          <div class="form">
            <div class="sec head">${icon(4, 7, svg`<path d="M0 0l3.500 3.500L0 7z" fill="#e8e8e8"></path>`)}<fit-text w="32">Styles</fit-text></div>
            <div class="line h28"><span class="lab"><fit-text w="23">Font</fit-text></span><span class="field"><fit-text w="23">Arial</fit-text></span></div>
            <div class="line h26"><span class="lab"><fit-text w="27">Color</fit-text></span>
              ${icon(15, 15, svg`<path d="M2 1h10v3.500H2zM12 2.500h2v4.500H7v2.500" fill="none" stroke=${G} stroke-width="1.400"></path><path d="M5.500 9h3v5.500h-3z" fill=${G}></path>`)}
              <span class="swatch"></span>${icon(12, 12, svg`<path d="M0 12l1-4 5-6 3 3-5 6z" fill=${G}></path>`)}</div>
            <div class="line h27"><span class="lab"><fit-text w="49">Line Style</fit-text></span><span class="btns">
              ${btn(svg`<path d="M1.500 11.500H5v3.500H1.500zM11.500 2h3.500v3.500h-3.500zM5 13.300h8.300V5.500"></path>`)}
              ${btn(svg`<path stroke="#3a8bd3" d="M1.500 11.500H5v3.500H1.500zM11.500 2h3.500v3.500h-3.500zM4.800 11.700l6.700-6.500"></path>`, "on")}
              ${btn(svg`<path d="M1 14h5V6"></path>`)}</span></div>
            <div class="line h27"><span class="lab"><fit-text w="37">Format</fit-text></span><span class="btns">
              ${btn(svg`<path d="M2 2h9v9H2z"></path><path d="M13 2h2v13H2v-2" stroke-dasharray="2 1.200"></path><path d="M15 15v-4.500L10.500 15z" fill=${G} stroke="none"></path>`)}
              ${btn(svg`<path d="M7 7h7v7H7z" fill=${G}></path><path d="M3 3h8v8H3z" fill="#3f4041"></path>`, "on")}
              ${btn("")}</span></div>
            <div class="line h24"><span class="lab"></span><span class="btns"><span class="btn lbl"><fit-text w="28">Label</fit-text></span></span></div>
            <div class="line h25"><span class="lab"></span><span class="btns">
              ${btn(svg`<path d="M4.500 3H2v11h2.500M12.500 3H15v11h-2.500M8.500 3v5M6 5.500h5M6 10.500h5.500M5.500 13h5.500M7.700 9l-.7 5.500M10.200 9l-.7 5.500"></path>`, "on")}
              ${btn(svg`<path d="M4 3H2v11h2M13 3h2v11h-2M5.500 12V5.500h3v2H12V12zM5.500 7.500h3"></path>`)}
              ${btn("", "on")}</span></div>
            <div class="line h24"><span class="lab"></span><span class="btns">
              ${btn(svg`<path d="M1.500 2h14M1.500 15h14M2 5l3 3M5 5L2 8M6 10.500l5-5 3 2.500-5 5z"></path>`)}
              ${btn(svg`<path d="M1.500 2h14M1.500 15h14M2 5l3 3M5 5L2 8"></path><circle cx="10" cy="8.500" r="2.500" stroke-width="2.200"></circle>`)}
              ${btn(svg`<path d="M1.500 2h14M1.500 15h14"></path>`)}</span></div>
            <div class="line h27"><span class="lab"><fit-text w="52">Alignment</fit-text></span><span class="btns">
              ${btn(svg`<path d="M5 5h7v7H5z" fill=${G}></path><path d="M2 2h5v5H2zM10 10h5v5h-5z" fill="#57585a"></path>`)}
              ${btn(svg`<path d="M2 2h6v6H2zM9 9h6v6H9z"></path><path d="M5 5h7v7H5z" fill=${G}></path>`)}</span><span class="btns">${btn("")}</span></div>
            <div class="line h21"><span class="lab"></span><span class="btns">
              ${btn(svg`<path d="M1.500 3h14M4.500 6h3v5h-3zM10 6h3v8.500h-3z"></path>`)}
              ${btn(svg`<path d="M4 6.500h3v5H4zM9.500 3h3.500v11.500H9.500zM1.500 8.700h2.500M7 8.700h2.500M13 8.700h2.500"></path>`)}
              ${btn("")}</span></div>
            <div class="line h26"><span class="lab"></span><span class="btns">
              ${btn(svg`<path d="M3 2v3.500h11V2M3 8h11M3 11h11v3H3zM3 8v3"></path>`)}
              ${btn(svg`<path d="M2 3h3v11H2zM7 3h3v11H7zM15.500 3H12v11h3.500"></path>`)}
              ${btn("")}</span></div>
            <div class="sec props head">${icon(4, 7, svg`<path d="M0 0l3.500 3.500L0 7z" fill="#e8e8e8"></path>`)}<fit-text w="56">Properties</fit-text></div>
            <div class="line h26"><span class="lab wide"><fit-text w="28">name</fit-text></span><span class="field"></span></div>
            <div class="line h26"><span class="lab wide"><fit-text w="54">stereotype</fit-text></span><span class="field dash">—</span></div>
          </div>
          <div class="thumb"></div>
        </div>
        <div class="hthumb"></div>
      </div>
    </div>`;
  }

  private taskbar() {
    const w = "#fff";
    return html`<div class="task">
      <div class="sys">${icon(16, 16, svg`<path d="M0 2.300l6.500-.9v6.100H0zM7.500 1.200L16 0v7.500H7.500zM0 8.500h6.500v6.100L0 13.700zM7.500 8.500H16V16l-8.500-1.200z" fill=${w}></path>`)}</div>
      <div class="sys">${icon(16, 16, svg`<circle cx="9.500" cy="6" r="5" fill="none" stroke=${w} stroke-width="1.200"></circle><path d="M6 9.700L.8 15.200" stroke=${w} stroke-width="1.300"></path>`)}</div>
      <div class="sys">${icon(17, 16, svg`<path d="M1 1v2.500h10V1M1 15v-2.500h10V15M1 5.500h10v5H1zM14.500 0v4M14.500 10v6M13.300 6h2.500v2h-2.500z" fill="none" stroke=${w} stroke-width="1.200"></path>`)}</div>
      <div class="gap"></div>
      ${TASKS.map((k) => html`<div class="t ${k.on ? "on" : ""} ${k.active ? "active" : ""}">${k.active ? star(22) : icon(25, 26, k.i)}</div>`)}
      <div class="tray">
        <div class="c help">${icon(24, 24, svg`<circle cx="11" cy="12" r="10.500" fill="#1b93d8" stroke="#e8f4fb"></circle><path d="M7.500 9c0-5 7.500-4.500 7 0-.2 2.500-3.200 2.500-3.200 5.500M11.200 16.500v2.300" fill="none" stroke="#fff" stroke-width="2.400"></path><circle cx="18.500" cy="18" r="5" fill="#f5a81c"></circle><path d="M18.500 15v3.800M18.500 20v1.300" stroke="#fff" stroke-width="1.500"></path>`)}</div>
        <div class="c w42">${icon(16, 18, svg`<g fill="none" stroke=${w} stroke-width="1.200"><circle cx="10.500" cy="4" r="2.800"></circle><circle cx="5" cy="9" r="2.300"></circle><path d="M1 16c0-5.500 8-5.500 8 0M7 8.500c3-3 8-1 8 3.500"></path></g>`)}</div>
        <div class="c w29">${icon(11, 7, svg`<path d="M.5 6.500l5-5 5 5" fill="none" stroke=${w} stroke-width="1.300"></path>`)}</div>
        <div class="c w20">${icon(16, 12, svg`<path d="M3 11C0 11 0 7 2.500 6.500 3 2 8-.5 10.500 3c4 0 3 2.500 3 3 3 .5 2.500 5 0 5z" fill=${w}></path><path d="M4.500 11c-1-3 2-4 3-3.500" fill="none" stroke="#0b0b0c"></path>`)}</div>
        <div class="c w28">${icon(15, 9, svg`<path d="M.6.600h12.500v7.800H.6z" fill="none" stroke=${w} stroke-width="1.200"></path><path d="M2.300 2.300h9v4.500h-9z" fill=${w}></path><path d="M14 3v3" stroke=${w} stroke-width="1.500"></path>`)}</div>
        <div class="c w22">${icon(12, 12, svg`<g fill="none" stroke="#ddd" stroke-width="1.100"><path d="M1 11A10 10 0 0 1 11 1"></path><path d="M4 11.500A7 7 0 0 1 11 4.500"></path><path d="M7 11.500a4 4 0 0 1 4-4"></path></g><circle cx="10.500" cy="11" r="1" fill="#ddd"></circle>`)}</div>
        <div class="c w24">${icon(17, 18, svg`<path d="M5 1l3.500 2L12 1l4 2-3.500 2.300L16 7.500l-4 2-3.500-2-3.500 2-4-2 3.500-2.200L1 3z" fill="#e02b2b"></path><rect x="1" y="7" width="10" height="10" rx="1" fill="#d92b2b"></rect><text class="badge" x="6" y="15.500">2</text>`)}</div>
        <div class="c w24">${icon(15, 13, svg`<path d="M1 4.500h2.500L7 1v11L3.500 8.500H1zM9.500 4l4.500 5M14 4L9.500 9" fill="none" stroke=${w} stroke-width="1.200"></path>`)}</div>
        <div class="c w35"><fit-text w="23">ENG</fit-text></div>
        <div class="clock"><fit-text w="28">21:06</fit-text><br><fit-text w="53">30-Sep-18</fit-text></div>
        <div class="c action">${icon(26, 24, svg`<path d="M1 1h15v12H7l-3 3v-3H1z" fill="#fff"></path><path d="M3.500 4.500h10M3.500 7h10M3.500 9.500h10" stroke="#0b0b0c"></path><circle cx="16.500" cy="15.500" r="7.500" fill="#4a4a4a"></circle><text class="badge" x="16.500" y="19.200">3</text>`)}</div>
      </div>
    </div>`;
  }

  render() {
    return html`<div class="app">
      <div class="title"><span class="name">${star(16)}<fit-text w="209">• App.mdj — StarUML (UNREGISTERED)</fit-text></span>
        <span class="cap">
          ${icon(10, 10, svg`<path d="M0 5.500h10" stroke="#111"></path>`)}
          ${icon(10, 10, svg`<path d="M.5 2.500h7v7h-7zM2.500 2.500v-2h7v7h-2" fill="none" stroke="#111"></path>`)}
          ${icon(10, 10, svg`<path d="M0 0l10 10M10 0L0 10" stroke="#111" stroke-width="1.100"></path>`)}
        </span>
      </div>
      <div class="menu">${MENU.map(([t, w, g]) => html`<fit-text w=${w} style="margin-right:${g}px">${t}</fit-text>`)}</div>
      <div></div>
      <div class="body">
        ${this.left()}
        <div class="canvas">${this.diagram()}<div class="hbar"><i></i></div></div>
        <div class="vbar"><i></i></div>
        ${this.strip()}
        ${this.right()}
      </div>
      <div class="status">
        <div class="warn">${icon(14, 13, svg`<path d="M7 0l7 13H0z" fill="#f2b01e"></path><path d="M7 4v5M7 10v1.500" stroke="#4b4c4e" stroke-width="1.500"></path>`)}</div>
        <div class="zoom"><fit-text w="24">40%</fit-text></div>
      </div>
      ${this.taskbar()}
    </div>`;
  }
}
